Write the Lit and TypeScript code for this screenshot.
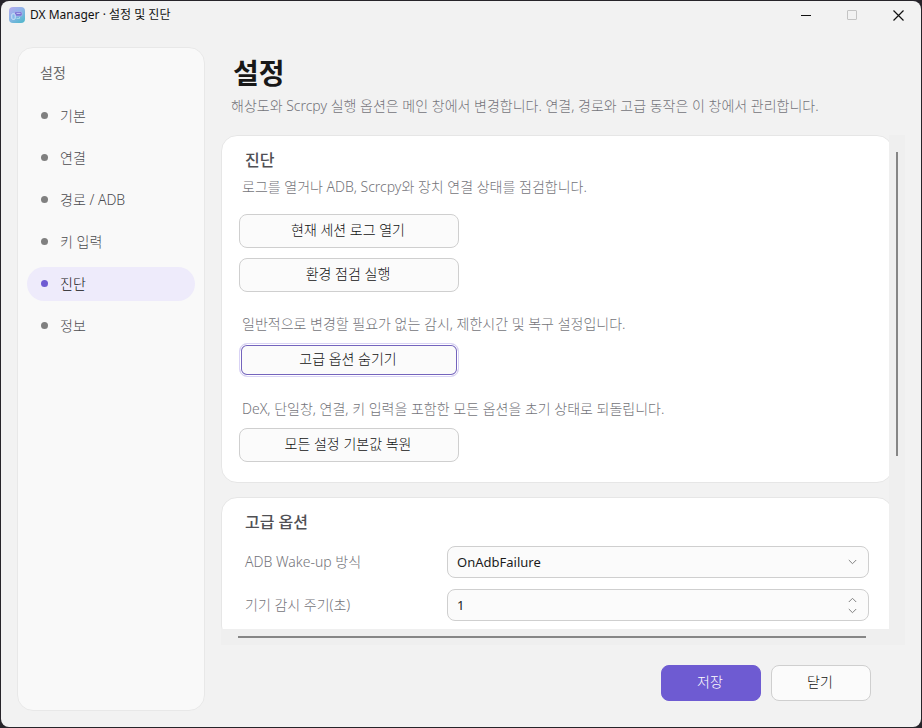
import { LitElement, html, css } from "lit";
import { customElement, property, state } from "lit/decorators.js";
import { classMap } from "lit/directives/class-map.js";

const chevronDown = html`<svg width="9" height="6" viewBox="0 0 9 6" fill="none" stroke="currentColor" aria-hidden="true"><path d="M.8 1l3.7 3.7L8.200 1" /></svg>`;
const chevronUp = html`<svg width="9" height="6" viewBox="0 0 9 6" fill="none" stroke="currentColor" aria-hidden="true"><path d="M.8 5l3.700-3.700L8.200 5" /></svg>`;

@customElement("title-bar")
class TitleBar extends LitElement {
  @property() caption = "";

  static styles = css`
    :host {
      display: flex;
      align-items: center;
      height: 28px;
      padding-left: 8px;
    }
    .caption {
      flex: 1;
      margin-left: 5px;
      font-size: 12px;
      line-height: 20px;
      color: #111;
      white-space: nowrap;
    }
    .control {
      display: grid;
      place-items: center;
      width: 46px;
      height: 28px;
      padding: 0;
      border: 0;
      background: none;
      color: #111;
    }
    .control:disabled {
      color: #c4c4c4;
    }
  `;

  render() {
    return html`
      <svg width="16" height="16" viewBox="0 0 16 16" aria-hidden="true">
        <defs>
          <linearGradient id="tile" x1="0" y1="0" x2=".7" y2="1">
            <stop offset="0" stop-color="#b9a9ee" />
            <stop offset=".5" stop-color="#8db5e8" />
            <stop offset="1" stop-color="#58b7cf" />
          </linearGradient>
        </defs>
        <rect width="16" height="16" rx="4" fill="url(#tile)" />
        <rect x="5.500" y="4.800" width="7.500" height="4.200" rx="1.200" fill="#7a70d2" stroke="#b9bdf2" stroke-width=".6" />
        <path d="M7.500 6.500h4" stroke="#d9dcfa" stroke-width=".7" />
        <rect x="2.800" y="6.800" width="3.400" height="5.500" rx="1" fill="#86b8e8" stroke="#e0eefc" stroke-width=".8" />
        <path d="M7.500 11.500h3v-1.500" fill="none" stroke="#b5e0ee" stroke-width=".8" />
      </svg>
      <span class="caption">${this.caption}</span>
      <button class="control" aria-label="최소화">
        <svg width="11" height="11" viewBox="0 0 11 11"><path d="M0 5.500h10" stroke="currentColor" /></svg>
      </button>
      <button class="control" aria-label="최대화" disabled>
        <svg width="11" height="11" viewBox="0 0 11 11" fill="none"><rect x=".5" y=".5" width="9" height="9" rx=".5" stroke="currentColor" /></svg>
      </button>
      <button class="control" aria-label="창 닫기">
        <svg width="11" height="11" viewBox="0 0 11 11"><path d="M.5.5l10 10M10.500.5l-10 10" stroke="currentColor" stroke-width="1.200" /></svg>
      </button>
    `;
  }
}

@customElement("side-nav")
class SideNav extends LitElement {
  @property({ type: Array }) items: string[] = [];
  @property() current = "";

  static styles = css`
    :host {
      display: block;
      box-sizing: border-box;
      padding: 14px 9px;
      border: 1px solid #e8e8e8;
      border-radius: 16px;
      background: #f9f9f9;
    }
    .heading {
      margin: 0 0 15px 13px;
      font-size: 14px;
      font-weight: 400;
      line-height: 22px;
      color: #686868;
    }
    .list {
      display: grid;
      gap: 8px;
      margin: 0;
      padding: 0;
      list-style: none;
    }
    .item {
      display: flex;
      align-items: center;
      gap: 12px;
      box-sizing: border-box;
      height: 34px;
      padding: 0 0 1px 14px;
      border-radius: 17px;
      font-size: 14px;
      font-weight: 300;
      line-height: 20px;
      color: #4c4c50;
      text-decoration: none;
    }
    .item::before {
      content: "";
      width: 7px;
      height: 7px;
      border-radius: 50%;
      background: #808080;
    }
    .active {
      background: #eeebfb;
      color: #111;
    }
    .active::before {
      background: #6e5bd2;
    }
  `;

  render() {
    return html`
      <h2 class="heading">설정</h2>
      <ul class="list">
        ${this.items.map(
          (name) => html`<li>
            <a
              href="#"
              class=${classMap({ item: true, active: name === this.current })}
              aria-current=${name === this.current ? "page" : "false"}
              >${name}</a
            >
          </li>`,
        )}
      </ul>
    `;
  }
}

@customElement("app-root")
class AppRoot extends LitElement {
  @state() private interval = 1;

  static styles = css`
    :host {
      display: block;
      box-sizing: border-box;
      height: 100vh;
      padding: 1px;
      background: #27242a;
      font-family: "Noto Sans", "Noto Sans CJK KR", sans-serif;
      color: #1b1b1b;
    }
    .window {
      display: flex;
      flex-direction: column;
      height: 100%;
      border-radius: 8px;
      background: #f2f2f2;
      overflow: hidden;
    }
    .body {
      flex: 1;
      min-height: 0;
      display: grid;
      grid-template-columns: 188px minmax(0, 1fr);
      gap: 16px;
      padding: 18px 16px 16px;
    }
    .main {
      display: flex;
      flex-direction: column;
      min-height: 0;
    }
    .title {
      margin: 6px 0 0 12px;
      font-size: 28px;
      font-weight: 700;
      line-height: 40px;
      color: #181818;
    }
    .subtitle {
      margin: 3px 0 0 10px;
      font-size: 14px;
      font-weight: 300;
      line-height: 20px;
      color: #74747a;
      white-space: nowrap;
    }
    .scroller {
      flex: 1;
      min-height: 0;
      display: grid;
      grid-template-columns: minmax(0, 1fr) 16px;
      grid-template-rows: minmax(0, 1fr) 16px;
      margin-top: 19px;
      background: #efefef;
    }
    .viewport {
      overflow: hidden;
      background: #f2f2f2;
    }
    .track-v {
      box-sizing: border-box;
      padding: 17px 7px;
    }
    .track-h {
      box-sizing: border-box;
      padding: 7px 17px;
    }
    .thumb-v {
      width: 2px;
      height: 66%;
      background: #868686;
    }
    .thumb-h {
      width: 99%;
      height: 2px;
      background: #868686;
    }
    .content {
      display: grid;
      gap: 14px;
      width: calc(100% + 4px);
    }
    .card {
      box-sizing: border-box;
      padding: 13px 23px 20px 17px;
      border: 1px solid #e6e6e6;
      border-radius: 16px;
      background: #fff;
    }
    .card-title {
      margin: 0 0 6px 6px;
      font-size: 16px;
      font-weight: 500;
      line-height: 22px;
      color: #505054;
    }
    .group {
      display: grid;
      gap: 9px;
      justify-items: start;
      margin-top: 22px;
    }
    .first {
      gap: 10px;
      margin-top: 0;
    }
    .note {
      margin: 0 0 0 3px;
      font-size: 14px;
      font-weight: 300;
      line-height: 20px;
      color: #74747a;
      white-space: nowrap;
    }
    .first .note {
      margin-bottom: 7px;
    }
    .button {
      box-sizing: border-box;
      width: 220px;
      height: 34px;
      padding: 0 2px 3px 0;
      border: 1px solid #cfcfcf;
      border-radius: 8px;
      background: #fbfbfb;
      font: inherit;
      font-size: 14px;
      font-weight: 300;
      line-height: 20px;
      color: #111;
    }
    .focused {
      border-color: #d9d3f5;
      box-shadow: inset 0 0 0 1px #fff, inset 0 0 0 2px #7464bd;
    }
    .fields {
      display: grid;
      grid-template-columns: 202px minmax(0, 1fr);
      row-gap: 11px;
      align-items: center;
      margin: 13px 0 0 6px;
    }
    .label {
      font-size: 14px;
      font-weight: 300;
      line-height: 20px;
      color: #74747a;
    }
    .field {
      position: relative;
      color: #808080;
    }
    .input {
      box-sizing: border-box;
      display: block;
      width: 100%;
      height: 32px;
      margin: 0;
      padding: 0 28px 0 9px;
      border: 1px solid #cfcfcf;
      border-radius: 8px;
      background: #fbfbfb;
      font: inherit;
      font-size: 13px;
      color: #1b1b1b;
      appearance: none;
    }
    .number {
      appearance: textfield;
    }
    .number::-webkit-inner-spin-button {
      appearance: none;
      margin: 0;
    }
    .chevrons {
      position: absolute;
      top: 0;
      right: 8px;
      display: grid;
      align-content: center;
      gap: 5px;
      height: 100%;
      pointer-events: none;
    }
    .chevrons svg {
      display: block;
      margin: 0 4px;
    }
    .spin {
      display: block;
      height: 6px;
      padding: 0;
      border: 0;
      background: none;
      color: inherit;
      pointer-events: auto;
    }
    .footer {
      display: flex;
      justify-content: flex-end;
      gap: 10px;
      margin: 20px 34px 10px 0;
    }
    .action {
      width: 100px;
      height: 36px;
    }
    .primary {
      border-color: #6e5bd2;
      background: #6e5bd2;
      color: #fff;
    }
  `;

  private step(delta: number) {
    this.interval = Math.max(1, this.interval + delta);
  }

  render() {
    return html`
      <div class="window">
        <title-bar caption="DX Manager · 설정 및 진단"></title-bar>
        <div class="body">
          <side-nav .items=${["기본", "연결", "경로 / ADB", "키 입력", "진단", "정보"]} current="진단"></side-nav>
          <main class="main">
            <h1 class="title">설정</h1>
            <p class="subtitle">해상도와 Scrcpy 실행 옵션은 메인 창에서 변경합니다. 연결, 경로와 고급 동작은 이 창에서 관리합니다.</p>
            <div class="scroller">
              <div class="viewport">
                <div class="content">
                  <section class="card">
                    <h2 class="card-title">진단</h2>
                    <div class="group first">
                      <p class="note">로그를 열거나 ADB, Scrcpy와 장치 연결 상태를 점검합니다.</p>
                      <button class="button">현재 세션 로그 열기</button>
                      <button class="button">환경 점검 실행</button>
                    </div>
                    <div class="group">
                      <p class="note">일반적으로 변경할 필요가 없는 감시, 제한시간 및 복구 설정입니다.</p>
                      <button class="button focused">고급 옵션 숨기기</button>
                    </div>
                    <div class="group">
                      <p class="note">DeX, 단일창, 연결, 키 입력을 포함한 모든 옵션을 초기 상태로 되돌립니다.</p>
                      <button class="button">모든 설정 기본값 복원</button>
                    </div>
                  </section>
                  <section class="card">
                    <h2 class="card-title">고급 옵션</h2>
                    <div class="fields">
                      <label class="label" for="wake">ADB Wake-up 방식</label>
                      <div class="field">
                        <select class="input" id="wake">
                          <option>OnAdbFailure</option>
                        </select>
                        <span class="chevrons">${chevronDown}</span>
                      </div>
                      <label class="label" for="interval">기기 감시 주기(초)</label>
                      <div class="field">
                        <input class="input number" id="interval" type="number" min="1" .value=${String(this.interval)} />
                        <span class="chevrons">
                          <button class="spin" aria-label="늘리기" @click=${() => this.step(1)}>${chevronUp}</button>
                          <button class="spin" aria-label="줄이기" @click=${() => this.step(-1)}>${chevronDown}</button>
                        </span>
                      </div>
                    </div>
                  </section>
                </div>
              </div>
              <div class="track-v"><div class="thumb-v"></div></div>
              <div class="track-h"><div class="thumb-h"></div></div>
            </div>
            <div class="footer">
              <button class="button action primary">저장</button>
              <button class="button action">닫기</button>
            </div>
          </main>
        </div>
      </div>
    `;
  }
}
